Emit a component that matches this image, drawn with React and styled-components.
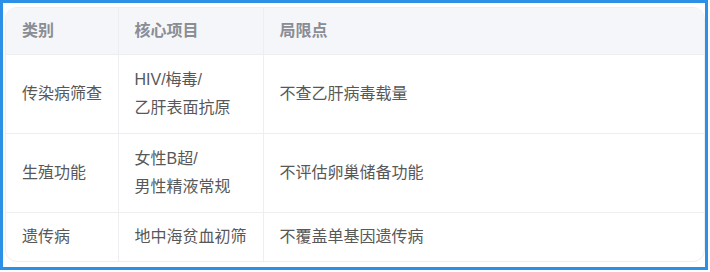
import React from 'react';
import styled, { createGlobalStyle } from 'styled-components';

const GlobalStyle = createGlobalStyle`
  html, body {
    margin: 0;
    padding: 0;
    background: #ffffff;
  }
  body {
    font-family: "Liberation Sans", "Noto Sans CJK SC", sans-serif;
  }
`;

const Frame = styled.div`
  box-sizing: border-box;
  width: 708px;
  height: 270px;
  border: 3px solid #2b90e6;
  padding: 4px 0 0 2px;
`;

const Card = styled.div`
  box-sizing: border-box;
  width: 700px;
  border: 1px solid #eceef1;
  border-radius: 12px;
  overflow: hidden;
  background: #fff;
`;

const Table = styled.table`
  width: 100%;
  border-collapse: collapse;
  table-layout: fixed;
`;

const Th = styled.th`
  text-align: left;
  font-weight: 700;
  font-size: 16px;
  line-height: 26px;
  color: #8a8d94;
  background: #f5f6f9;
  padding: 10px 16px;
  border-bottom: 1px solid #eceef1;
  white-space: nowrap;
  & + & {
    border-left: 1px solid #eceef1;
  }
`;

const Td = styled.td`
  font-size: 16px;
  line-height: 28px;
  color: #585858;
  padding: ${p => (p.$tall ? '11px 16px' : '10px 16px')};
  vertical-align: middle;
  white-space: nowrap;
  & + & {
    border-left: 1px solid #eceef1;
  }
`;

const Row = styled.tr`
  & + & td {
    border-top: 1px solid #eceef1;
  }
`;

const rows = [
  { kind: '传染病筛查', items: ['HIV/梅毒/', '乙肝表面抗原'], limit: '不查乙肝病毒载量' },
  { kind: '生殖功能', items: ['女性B超/', '男性精液常规'], limit: '不评估卵巢储备功能' },
  { kind: '遗传病', items: ['地中海贫血初筛'], limit: '不覆盖单基因遗传病' },
];

export default function App() {
  return (
    <>
      <GlobalStyle />
      <Frame>
        <Card>
          <Table>
            <colgroup>
              <col style={{ width: 112 }} />
              <col style={{ width: 145 }} />
              <col />
            </colgroup>
            <thead>
              <tr>
                <Th>类别</Th>
                <Th>核心项目</Th>
                <Th>局限点</Th>
              </tr>
            </thead>
            <tbody>
              {rows.map(r => (
                <Row key={r.kind}>
                  <Td $tall={r.items.length > 1}>{r.kind}</Td>
                  <Td $tall={r.items.length > 1}>
                    {r.items.map((t, i) => (
                      <div key={i}>{t}</div>
                    ))}
                  </Td>
                  <Td $tall={r.items.length > 1}>{r.limit}</Td>
                </Row>
              ))}
            </tbody>
          </Table>
        </Card>
      </Frame>
    </>
  );
}
